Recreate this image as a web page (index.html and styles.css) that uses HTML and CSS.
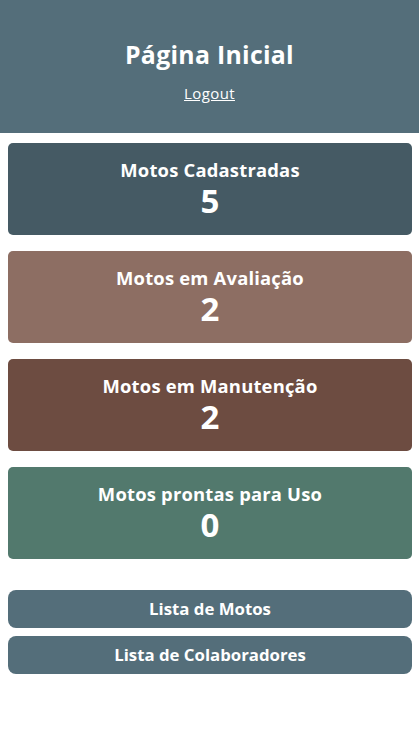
FILE: index.html
```html
<!DOCTYPE html>
<html lang="pt-BR">
<head>
<meta charset="utf-8">
<title>Página Inicial</title>
<link rel="stylesheet" href="styles.css">
</head>
<body>
<header class="topbar">
  <h1 class="topbar-title">Página Inicial</h1>
  <a class="topbar-link" href="#">Logout</a>
</header>
<main class="content">
  <section class="cards">
    <div class="card card-total">
      <div class="card-label">Motos Cadastradas</div>
      <div class="card-value">5</div>
    </div>
    <div class="card card-eval">
      <div class="card-label">Motos em Avaliação</div>
      <div class="card-value">2</div>
    </div>
    <div class="card card-maint">
      <div class="card-label">Motos em Manutenção</div>
      <div class="card-value">2</div>
    </div>
    <div class="card card-ready">
      <div class="card-label">Motos prontas para Uso</div>
      <div class="card-value">0</div>
    </div>
  </section>
  <nav class="actions">
    <a class="action-btn" href="#">Lista de Motos</a>
    <a class="action-btn" href="#">Lista de Colaboradores</a>
  </nav>
</main>
</body>
</html>
```
FILE: styles.css
```css
* { box-sizing: border-box; }
html, body {
  margin: 0;
  padding: 0;
  background: #ffffff;
  font-family: "Open Sans", "Liberation Sans", sans-serif;
  color: #ffffff;
}
.topbar {
  background: #546e7a;
  height: 133px;
  display: flex;
  flex-direction: column;
  align-items: center;
  padding-top: 38px;
}
.topbar-title {
  margin: 0;
  font-size: 24.8px;
  font-weight: 700;
  line-height: 32px;
  letter-spacing: 0.3px;
}
.topbar-link {
  margin-top: 14px;
  color: #ffffff;
  font-size: 15px;
  line-height: 18px;
  letter-spacing: 0.4px;
  text-decoration: underline;
}
.content {
  padding: 10px 7px 0 8px;
}
.cards {
  display: flex;
  flex-direction: column;
  gap: 16px;
}
.card {
  height: 92px;
  border-radius: 5px;
  display: flex;
  flex-direction: column;
  align-items: center;
  padding-top: 16px;
}
.card-label {
  font-size: 18.4px;
  font-weight: 700;
  line-height: 22px;
  letter-spacing: 0.2px;
}
.card-value {
  font-size: 33px;
  font-weight: 700;
  line-height: 40px;
}
.card-total { background: #455a64; }
.card-eval { background: #8d6e63; }
.card-maint { background: #6d4c41; }
.card-ready { background: #52796d; }
.actions {
  margin-top: 31px;
  display: flex;
  flex-direction: column;
  gap: 8px;
}
.action-btn {
  height: 38px;
  border-radius: 8px;
  background: #546e7a;
  color: #ffffff;
  text-decoration: none;
  font-size: 16.8px;
  font-weight: 700;
  display: flex;
  align-items: center;
  justify-content: center;
  padding-bottom: 1px;
}
```
